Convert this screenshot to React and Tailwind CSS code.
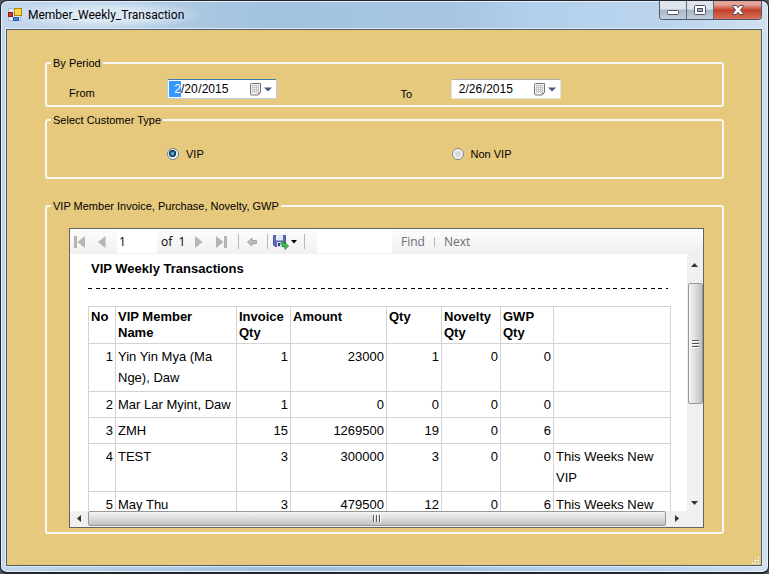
import React from "react";

const UI = "font-['Liberation_Sans',Arial,sans-serif]";
const SEGOE = "font-['Open_Sans','Noto_Sans',sans-serif]";

const rows = [
  ["1", "Yin Yin Mya (Ma Nge), Daw", "1", "23000", "1", "0", "0", ""],
  ["2", "Mar Lar Myint, Daw", "1", "0", "0", "0", "0", ""],
  ["3", "ZMH", "15", "1269500", "19", "0", "6", ""],
  ["4", "TEST", "3", "300000", "3", "0", "0", "This Weeks New VIP"],
  ["5", "May Thu", "3", "479500", "12", "0", "6", "This Weeks New"],
];
const headings = ["No", "VIP Member\nName", "Invoice\nQty", "Amount", "Qty", "Novelty\nQty", "GWP\nQty", ""];

function AppIcon() {
  return (
    <svg width="14" height="14" viewBox="0 0 14 14" aria-hidden="true">
      <rect x="0.5" y="0.5" width="12" height="12" fill="#dfe9f4" stroke="#a9bed6" />
      <rect x="0.5" y="4.5" width="4" height="4" fill="#d8382c" stroke="#8e1c14" />
      <rect x="6.5" y="0.5" width="7" height="7" fill="#fbd44c" stroke="#b8860b" />
      <rect x="5.5" y="9.5" width="5" height="3" fill="#4a86e0" stroke="#2a5cae" />
    </svg>
  );
}

function Group({ title, className, children }) {
  return (
    <fieldset className={"min-w-0 rounded-[3px] border-2 border-[#f6f8f8] " + className}>
      <legend className="ml-1 h-4 px-0.5 leading-4">{title}</legend>
      {children}
    </fieldset>
  );
}

function DatePicker({ id, month, day, year, active }) {
  return (
    <div
      className={
        "flex h-5 w-[110px] items-center rounded-[2px] border bg-white pl-px pr-1 text-[12px]" +
        (active ? " border-[#b5cfe7] border-t-[#3d7bad]" : " border-[#e2e3ea] border-t-[#abadb3]")
      }
    >
      <input
        id={id}
        aria-label={id + " month"}
        defaultValue={month}
        className={"h-4 w-3 p-0 text-right outline-none " + (active ? "bg-[#3399ff] text-white" : "bg-white text-black")}
      />
      <span>/</span>
      <input aria-label={id + " day"} defaultValue={day} className="w-[14px] p-0 outline-none" />
      <span>/</span>
      <input aria-label={id + " year"} defaultValue={year} className="w-[30px] p-0 outline-none" />
      <button aria-label={"Open " + id + " calendar"} className="ml-auto flex items-center gap-0.5">
        <svg width="12" height="13" viewBox="0 0 12 13">
          <path d="M1.5 .5h9v9l-2.500 2.500h-6.500a1 1 0 0 1-1-1v-9.500a1 1 0 0 1 1-1z" fill="#f4f1f0" stroke="#7d7272" />
          <path d="M3 3h1v1H3zM5 3h1v1H5zM7 3h1v1H7zM3 5h1v1H3zM5 5h1v1H5zM7 5h1v1H7zM3 7h1v1H3zM5 7h1v1H5zM7 7h1v1H7zM3 9h1v1H3zM5 9h1v1H5z" fill="#fff" />
          <path d="M2 2.500h7M2 4.500h7M2 6.500h7M2 8.500h7M2.500 2v8M4.500 2v8M6.500 2v8M8.500 2v7" stroke="#c3c6d2" />
          <path d="M8 12V9.500h3z" fill="#8d8080" />
        </svg>
        <svg width="8" height="5" viewBox="0 0 8 5">
          <path d="M0 .5h8L4 4.500z" fill="#46587f" />
        </svg>
      </button>
    </div>
  );
}

function Radio({ label, checked }) {
  return (
    <label className="flex items-center gap-[7px]">
      <input
        type="radio"
        name="customer-type"
        defaultChecked={checked}
        className="size-3 appearance-none rounded-full border border-[#858585] bg-[radial-gradient(circle,#d4d6d9_0_25%,#f4f4f4_60%)] checked:border-[#6f7f8c] checked:bg-[radial-gradient(circle_at_45%_45%,#6fd0ee_0_8%,#1b6f96_22%,#12304a_42%,#eef2f4_52%)]"
      />
      {label}
    </label>
  );
}

function Separator({ className }) {
  return <span className={"w-px shrink-0 bg-[#b9b9b9] " + className} />;
}

function Toolbar() {
  return (
    <div className={"flex h-[25px] shrink-0 items-center bg-linear-to-b from-[#fdfdfd] to-[#f0f0f0] pl-1 text-[12px] " + SEGOE}>
      <button aria-label="First page" className="w-[11px] shrink-0">
        <svg width="11" height="12" viewBox="0 0 11 12"><path d="M0 0h3v12H0zM11 0v12L3.500 6z" fill="#b5b5b5" /></svg>
      </button>
      <button aria-label="Previous page" className="ml-[13px] w-2 shrink-0">
        <svg width="8" height="12" viewBox="0 0 8 12"><path d="M7.500 0v12L0 6z" fill="#b5b5b5" /></svg>
      </button>
      <input aria-label="Current page" defaultValue="1" className="ml-[11px] h-[23px] w-10 bg-white pl-[2px] outline-none" />
      <span className="ml-1 w-[26px] shrink-0 whitespace-pre">of  1</span>
      <button aria-label="Next page" className="ml-2 w-2 shrink-0">
        <svg width="8" height="12" viewBox="0 0 8 12"><path d="M0 0v12l7.500-6z" fill="#b5b5b5" /></svg>
      </button>
      <button aria-label="Last page" className="ml-[13px] w-[11px] shrink-0">
        <svg width="11" height="12" viewBox="0 0 11 12"><path d="M8 0h3v12H8zM0 0v12l7.500-6z" fill="#b5b5b5" /></svg>
      </button>
      <Separator className="ml-[11px] h-[15px]" />
      <button aria-label="Back" className="ml-2 w-[10px] shrink-0">
        <svg width="10" height="10" viewBox="0 0 10 10"><path d="M.5 5l4.500-4v2.500h4.500v3H5V9z" fill="#bdbdbd" stroke="#a2a2a2" /></svg>
      </button>
      <Separator className="ml-[10px] h-[15px]" />
      <button aria-label="Export" className="ml-[5px] flex shrink-0 items-center gap-[2px]">
        <svg width="16" height="16" viewBox="0 0 16 16">
          <path d="M.5 1.500h12v11h-10.500l-1.500-1.500z" fill="#5b69b8" stroke="#4a57a2" />
          <path d="M3 1h7v5.500H3z" fill="#e6eaf8" />
          <path d="M4 8h5v5H4z" fill="#d5daee" />
          <path d="M5 9h2v3H5z" fill="#39427c" />
          <path d="M7.500 9.500l2-2 2.500 2.500V8.500l3.500 3.500-3.500 3.500V14z" fill="#3fc04a" stroke="#1c8228" strokeWidth=".8" />
        </svg>
        <svg width="6" height="4" viewBox="0 0 6 4"><path d="M0 0h6L3 3.500z" fill="#000" /></svg>
      </button>
      <Separator className="ml-[7px] h-[15px]" />
      <input aria-label="Find text" className="ml-3 h-[23px] w-[75px] bg-white outline-none" />
      <button className="ml-[9px] text-[#6d6d6d]">Find</button>
      <Separator className="ml-[9px] h-[10px]" />
      <button className="ml-[9px] text-[#6d6d6d]">Next</button>
    </div>
  );
}

function Report() {
  return (
    <div className="w-[582px] shrink-0 pt-[7px] text-[13px] text-black">
      <h1 className="pl-[3px] text-[13px] font-bold leading-4">VIP Weekly Transactions</h1>
      <div className="mr-[2px] mt-[11px] h-px bg-[repeating-linear-gradient(90deg,#000_0_4px,transparent_4px_8px,#000_8px_12px,transparent_12px_15px)]" />
      <table className="mt-[17px] w-[583px] table-fixed border-collapse">
        <colgroup>
          <col className="w-[27px]" />
          <col className="w-[121px]" />
          <col className="w-[54px]" />
          <col className="w-[96px]" />
          <col className="w-[55px]" />
          <col className="w-[59px]" />
          <col className="w-[53px]" />
          <col className="w-[117px]" />
        </colgroup>
        <thead>
          <tr className="h-[37px]">
            {headings.map((h, i) => (
              <th key={i} className="whitespace-pre-line border border-[#d3d3d3] px-[2px] pt-[2px] text-left align-top font-bold leading-4">
                {h}
              </th>
            ))}
          </tr>
        </thead>
        <tbody>
          {rows.map((r) => (
            <tr key={r[0]} className={r[1].length > 20 || r[7] ? "h-12" : "h-[26px]"}>
              {r.map((c, i) => (
                <td
                  key={i}
                  className={
                    "border border-[#d3d3d3] px-[2px] pt-[2px] align-top leading-[21px] " +
                    (i === 1 || i === 7 ? "text-left" : "text-right")
                  }
                >
                  {c}
                </td>
              ))}
            </tr>
          ))}
        </tbody>
      </table>
    </div>
  );
}

function VerticalScrollbar() {
  return (
    <div className="flex w-4 shrink-0 flex-col items-center bg-[#f0f0f0]">
      <button aria-label="Scroll up" className="flex h-[29px] items-center pb-3 pt-1">
        <svg width="8" height="4" viewBox="0 0 8 4"><path d="M0 4h7L3.500 0z" fill="#333" /></svg>
      </button>
      <div className="flex h-[121px] w-[15px] flex-col items-center justify-center gap-px rounded-[2px] border border-[#979797] bg-linear-to-r from-[#f5f5f5] via-[#dcdcdc] to-[#c0c0c4]">
        <span className="h-[2px] w-[7px] border-t border-[#555] bg-white" />
        <span className="h-[2px] w-[7px] border-t border-[#555] bg-white" />
        <span className="h-[2px] w-[7px] border-t border-[#555] bg-white" />
      </div>
      <button aria-label="Scroll down" className="mt-auto flex h-4 items-center">
        <svg width="8" height="4" viewBox="0 0 8 4"><path d="M0 0h7L3.500 4z" fill="#333" /></svg>
      </button>
    </div>
  );
}

function HorizontalScrollbar() {
  return (
    <div className="flex h-4 shrink-0 items-center bg-[#f0f0f0] pb-px pr-4">
      <button aria-label="Scroll left" className="flex w-[18px] justify-center">
        <svg width="4" height="7" viewBox="0 0 4 7"><path d="M4 0v7L0 3.500z" fill="#333" /></svg>
      </button>
      <div className="flex h-[15px] flex-1 items-center justify-center gap-px rounded-[2px] border border-[#979797] bg-linear-to-b from-[#f5f5f5] via-[#dcdcdc] to-[#c0c0c4]">
        <span className="h-[7px] w-[2px] border-l border-[#555] bg-white" />
        <span className="h-[7px] w-[2px] border-l border-[#555] bg-white" />
        <span className="h-[7px] w-[2px] border-l border-[#555] bg-white" />
      </div>
      <button aria-label="Scroll right" className="flex w-[21px] justify-center">
        <svg width="4" height="7" viewBox="0 0 4 7"><path d="M0 0v7l4-3.500z" fill="#333" /></svg>
      </button>
    </div>
  );
}

function TitleBar() {
  return (
    <header className="flex h-7 shrink-0 items-start">
      <div className="flex h-7 items-center gap-[6px] bg-[radial-gradient(ellipse_at_center,#dce9f5_30%,transparent_75%)] pl-[2px] pr-4 font-['Roboto',sans-serif] text-[12px] text-black">
        <AppIcon />
        <span>Member_Weekly_Transaction</span>
      </div>
      <div className="ml-auto flex h-[19px] overflow-hidden rounded-b-[4px] border border-t-0 border-[#4c5a6b]">
        <button aria-label="Minimize" className="flex w-[27px] items-center justify-center border-r border-[#5c6979] bg-linear-to-b from-[#dde4ec] from-45% via-[#a8b6c8] via-50% to-[#c0cedd]">
          <svg width="12" height="12" viewBox="0 0 12 12"><rect x=".5" y="6.500" width="11" height="4" rx="1" fill="#fff" stroke="#4a5263" /></svg>
        </button>
        <button aria-label="Maximize" className="flex w-[27px] items-center justify-center border-r border-[#5c6979] bg-linear-to-b from-[#dde4ec] from-45% via-[#a8b6c8] via-50% to-[#c0cedd]">
          <svg width="12" height="10" viewBox="0 0 12 10">
            <rect x=".5" y=".5" width="11" height="9" rx="1" fill="#fff" stroke="#4a5263" />
            <rect x="3.500" y="3.500" width="5" height="3" fill="#9fb0c8" stroke="#4a5263" />
          </svg>
        </button>
        <button aria-label="Close" className="flex w-[47px] items-center justify-center bg-linear-to-b from-[#e3a397] from-20% via-[#c33c26] via-50% to-[#d8705a]">
          <svg width="12" height="10" viewBox="0 0 12 10">
            <path d="M.8.5h3.400L6 2.700 7.800.5h3.400v1L8.500 5l2.700 3.500v1H7.800L6 7.300 4.200 9.500H.8v-1L3.500 5 .8 1.500z" fill="#fff" stroke="#55455a" />
          </svg>
        </button>
      </div>
    </header>
  );
}

function ResizeGrip() {
  return (
    <svg width="9" height="9" viewBox="0 0 9 9" className="ml-auto mt-auto shrink-0" aria-hidden="true">
      <path d="M7 0h2v2H7zM4 3h2v2H4zM7 3h2v2H7zM1 6h2v2H1zM4 6h2v2H4zM7 6h2v2H7z" fill="#f3efe4" />
      <path d="M7 0h1v1H7zM4 3h1v1H4zM7 3h1v1H7zM1 6h1v1H1zM4 6h1v1H4zM7 6h1v1H7z" fill="#bcb59e" />
    </svg>
  );
}

export default function App() {
  return (
    <div className="h-screen min-h-[420px] bg-[#55555c]">
      <div className="flex h-full flex-col rounded-[7px] border border-b-2 border-[#23262e] bg-[linear-gradient(90deg,#c3d7ec,#a2c2de_35%,#a8c6e2_60%,#b2cfeb_70%,#bcd5ee_88%,#d0e0ef)] shadow-[inset_0_0_0_1px_#e6f0fa]">
        <div className="flex min-h-0 flex-1 flex-col pb-[6px] pl-[5px] pr-[6px]">
          <TitleBar />
          <main className={"flex min-h-0 flex-1 flex-col border border-[#4f5b66] bg-[#e6c97c] pl-[38px] pr-[2px] pt-[25px] text-[11px] text-black outline outline-[#dcebf8] " + UI}>
            <div className="flex min-h-0 flex-1 flex-col pr-[35px]">
              <Group title="By Period" className="h-[52px] shrink-0">
                <div className="grid grid-cols-[98px_233fr_51px_270fr] items-center pl-[22px] pt-[5px]">
                  <label htmlFor="From" className="pt-[7px]">From</label>
                  <DatePicker id="From" month="2" day="20" year="2015" active />
                  <label htmlFor="To" className="pt-[10px]">To</label>
                  <DatePicker id="To" month="2" day="26" year="2015" />
                </div>
              </Group>
              <Group title="Select Customer Type" className="mt-[5px] h-[67px] shrink-0">
                <div className="grid grid-cols-[284fr_270fr] pl-[120px] pt-[18px] leading-4">
                  <Radio label="VIP" checked />
                  <Radio label="Non VIP" />
                </div>
              </Group>
              <Group title="VIP Member Invoice, Purchase, Novelty, GWP" className="mt-[19px] flex min-h-0 flex-1 flex-col">
                <div className="mb-1 ml-[22px] mr-[18px] mt-[14px] flex min-h-0 flex-1 flex-col border border-[#646464] bg-white">
                  <Toolbar />
                  <div className="flex min-h-0 flex-1">
                    <div className="min-w-0 flex-1 overflow-hidden pl-[18px]">
                      <Report />
                    </div>
                    <VerticalScrollbar />
                  </div>
                  <HorizontalScrollbar />
                </div>
              </Group>
            </div>
            <div className="flex h-[31px] shrink-0"><ResizeGrip /></div>
          </main>
        </div>
      </div>
    </div>
  );
}
